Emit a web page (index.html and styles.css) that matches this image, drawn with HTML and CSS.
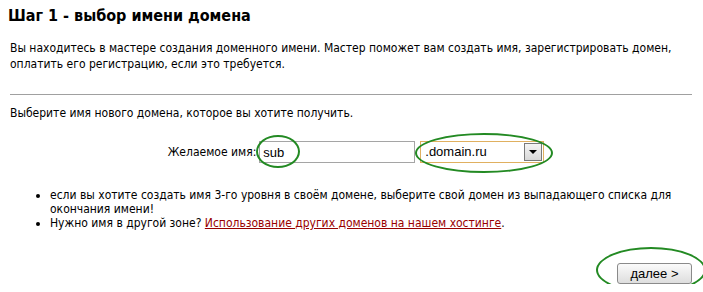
FILE: index.html
```html
<!DOCTYPE html>
<html lang="ru">
<head>
  <meta charset="UTF-8" />
  <title>Шаг 1 - выбор имени домена</title>
  <link rel="stylesheet" href="styles.css">
</head>
<body>
  <div class="wizard">
    <h1>Шаг 1 - выбор имени домена</h1>

    <p class="intro">Вы находитесь в мастере создания доменного имени. Мастер поможет вам создать имя, зарегистрировать домен, оплатить его регистрацию, если это требуется.</p>

    <hr class="sep" />

    <p class="prompt">Выберите имя нового домена, которое вы хотите получить.</p>

    <div class="name-row">
      <label for="name">Желаемое имя:</label>
      <span class="mark">
        <input type="text" id="name" class="name-input" value="sub" />
        <span class="ring ring-sub"></span>
      </span>
      <span class="mark">
        <span class="select">
          <span class="select-value">.domain.ru</span>
          <span class="select-btn"><span class="arrow"></span></span>
        </span>
        <span class="ring ring-select"></span>
      </span>
    </div>

    <ul class="hints">
      <li>если вы хотите создать имя 3-го уровня в своём домене, выберите свой домен из выпадающего списка для окончания имени!</li>
      <li>Нужно имя в другой зоне? <a href="#">Использование других доменов на нашем хостинге</a>.</li>
    </ul>

    <div class="actions">
      <span class="mark">
        <button type="button" class="next">далее &gt;</button>
        <span class="ring ring-next"></span>
      </span>
    </div>
  </div>
</body>
</html>
```

FILE: styles.css
```css
* {
  box-sizing: border-box;
}

body {
  margin: 0;
  background: #fff;
  color: #000;
  font-family: 'DejaVu Sans Condensed', 'DejaVu Sans', sans-serif;
  font-size: 12px;
  line-height: 16px;
}

.wizard {
  padding: 5px 11px 0 10px;
}

h1 {
  margin: 0 0 0 -2px;
  font-size: 16px;
  line-height: 22px;
  font-weight: bold;
}

.intro {
  margin: 13px 0 0;
}

.sep {
  margin: 22px 0 0;
  border: 0;
  border-top: 1px solid #a0a0a0;
  height: 0;
}

.prompt {
  margin: 10px 0 0;
}

.name-row {
  display: flex;
  justify-content: center;
  align-items: center;
  gap: 3px;
  margin-top: 20px;
  padding-left: 10px;
}

.mark {
  position: relative;
  display: inline-block;
}

.name-input {
  display: block;
  width: 156px;
  height: 22px;
  margin: 0;
  padding: 1px 3px;
  border: 1px solid #a5a5a5;
  font: inherit;
  font-family: 'Liberation Sans', Arial, sans-serif;
  font-size: 13px;
  color: #000;
  outline: none;
}

.select {
  display: flex;
  align-items: center;
  width: 124px;
  height: 22px;
  margin-left: 2px;
  padding: 1px;
  border: 1px solid #e0b060;
  font-family: 'Liberation Sans', Arial, sans-serif;
  font-size: 13px;
}

.select-value {
  flex: 1;
  padding-left: 3px;
}

.select-btn {
  display: flex;
  align-items: center;
  justify-content: center;
  width: 18px;
  height: 18px;
  border: 1px solid #7a7a7a;
  background: linear-gradient(#f4f4f4, #d8d8d8);
}

.arrow {
  width: 0;
  height: 0;
  border-left: 4px solid transparent;
  border-right: 4px solid transparent;
  border-top: 4px solid #000;
}

.ring {
  position: absolute;
  border: 2px solid #238a23;
  border-radius: 50%;
  pointer-events: none;
}

.ring-sub {
  left: -3px;
  top: -6px;
  width: 44px;
  height: 33px;
}

.ring-select {
  left: -3px;
  top: -8px;
  width: 138px;
  height: 40px;
}

.ring-next {
  left: -21px;
  top: -16px;
  width: 110px;
  height: 46px;
}

.hints {
  margin: 25px 0 0;
  padding-left: 40px;
  list-style: disc;
  line-height: 14px;
}

.hints a {
  color: #990000;
  text-decoration: underline;
}

.actions {
  display: flex;
  justify-content: flex-end;
  margin-top: 33px;
}

.next {
  display: block;
  width: 75px;
  height: 21px;
  margin: 0;
  padding: 0;
  border: 1px solid #8a8a8a;
  border-radius: 3px;
  background: linear-gradient(#fafafa, #dedede);
  font-family: 'Liberation Sans', Arial, sans-serif;
  font-size: 13px;
  color: #000;
}
```
